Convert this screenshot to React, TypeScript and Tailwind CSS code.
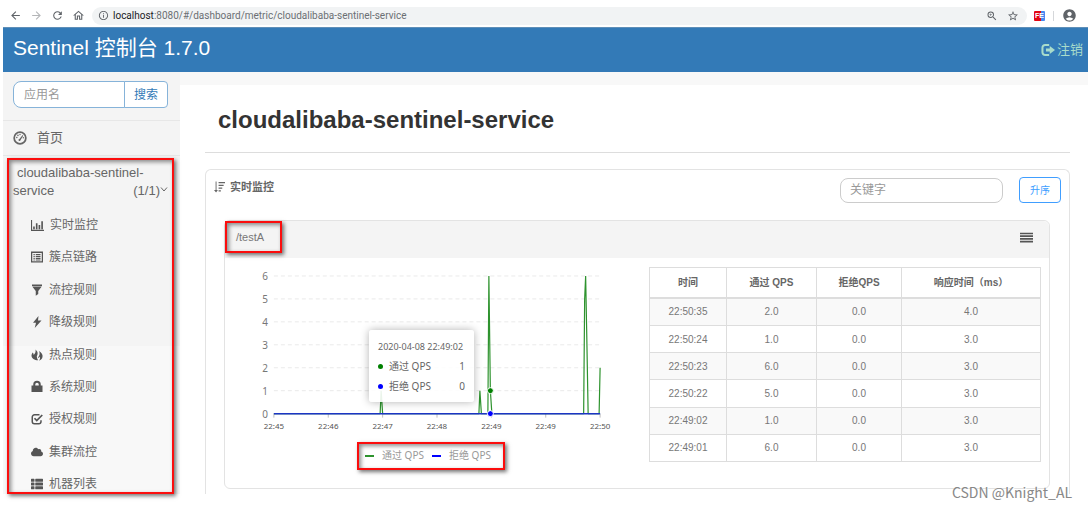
import type { ReactNode } from "react"
import { FaCloud, FaThList } from "react-icons/fa"
import {
  MdAccountCircle,
  MdArrowBack,
  MdArrowForward,
  MdInfoOutline,
  MdOutlineHome,
  MdRefresh,
  MdStarOutline,
  MdZoomIn,
} from "react-icons/md"

const red = "border-2 border-[#fb0d0d] pointer-events-none absolute"
const redShadow = "shadow-[2px_2px_4px_rgba(0,0,0,0.55),inset_2px_2px_4px_rgba(0,0,0,0.45)]"

const Glyph = ({ children, className = "w-3 h-3" }: { children: ReactNode; className?: string }) => (
  <svg viewBox="0 0 24 24" className={`${className} shrink-0`} fill="currentColor" aria-hidden="true">
    {children}
  </svg>
)

const DashboardIcon = () => (
  <Glyph className="w-[14px] h-[14px]">
    <circle cx="12" cy="12" r="10" fill="none" stroke="currentColor" strokeWidth="3" />
    <path d="M11 13.5 16.5 7l1 1-4.500 7.500a1.800 1.800 0 1 1-2-2z" />
    <circle cx="6.500" cy="11" r="1.300" />
    <circle cx="8.500" cy="7.500" r="1.300" />
    <circle cx="12" cy="6" r="1.200" />
    <circle cx="17.700" cy="11.500" r="1.200" />
  </Glyph>
)

const StatsIcon = () => (
  <Glyph className="w-[13px] h-[13px]">
    <path d="M0 2h2v18h22v2H0zM4 14h3v5H4zM9 8h3v11H9zM14 11h3v8h-3zM19 4h3v15h-3z" />
  </Glyph>
)

const ListAltIcon = () => (
  <Glyph>
    <path fillRule="evenodd" d="M0 1h24v22H0zM2.500 4v16.500h19V4z" />
    <path d="M5 6h2.500v2.500H5zM9.500 6H19v2.500H9.500zM5 10h2.500v2.500H5zM9.500 10H19v2.500H9.500zM5 14h2.500v2.500H5zM9.500 14H19v2.500H9.500zM5 17.500h2.500v1.500H5zM9.500 17.500H19v1.500H9.500z" />
  </Glyph>
)

const FilterIcon = () => (
  <Glyph>
    <path d="M2 1h20v3H2zM2.500 5h19L14.500 14v6l-5 3.500V14z" />
  </Glyph>
)

const FlashIcon = () => (
  <Glyph>
    <path d="M15 0 4 13.500h6L7.500 24 21 9h-7z" />
  </Glyph>
)

const FireIcon = () => (
  <Glyph>
    <path d="M9 1c3.500 3 5 6 4 10-.5 2-1.500 3-1.300 5 .2 2.500 1.300 4.500 2.500 6.500C7 22.500 1 19 1 13c0-2.500 1.500-4 2-6 1.500 1 2.500 3 2.300 5C8.500 9 10 5.500 9 1z" />
    <path d="M16 4c5 3 8 7 7 12-.6 3.500-3 6-7 7.500 2-3 2.800-5.800 1.500-8.500-.5 1.500-1.500 2.500-3.500 3 .3-2.500 3-4.500 3.200-7.500.2-2.500-.4-4.500-1.200-6.500z" />
  </Glyph>
)

const LockIcon = () => (
  <Glyph className="w-3 h-[13px]">
    <path fillRule="evenodd" d="M4.500 10V8a7.500 7.500 0 0 1 15 0v2H23v13H1V10zM8.500 10h7V8a3.500 3.500 0 0 0-7 0z" />
  </Glyph>
)

const CheckIcon = () => (
  <Glyph>
    <path
      d="M17 3.500H7A4.500 4.500 0 0 0 2.500 8v9A4.500 4.500 0 0 0 7 21.500h8.500A4.500 4.500 0 0 0 20 17v-2.500"
      fill="none"
      stroke="currentColor"
      strokeWidth="3"
    />
    <path d="m7 10.500 4.500 4.500L22.500 4" fill="none" stroke="currentColor" strokeWidth="3.500" />
  </Glyph>
)

const LogoutIcon = () => (
  <Glyph className="w-[14px] h-[14px]">
    <path
      d="M14 3.500H7A4.500 4.500 0 0 0 2.500 8v8A4.500 4.500 0 0 0 7 20.500h7"
      fill="none"
      stroke="currentColor"
      strokeWidth="3.500"
    />
    <path d="M8.500 9.500h6.500V5l9 7-9 7v-4.500H8.500z" />
  </Glyph>
)

const SortIcon = () => (
  <Glyph className="w-[11px] h-[12px]">
    <path d="M3.500 0h2v18.500h3L4.500 24 0 18.500h3.500zM10 1h14v3H10zM10 7h11v3H10zM10 13h8v3h-8zM10 19h5v3h-5z" />
  </Glyph>
)

const menu = [
  { label: "实时监控", icon: <StatsIcon /> },
  { label: "簇点链路", icon: <ListAltIcon /> },
  { label: "流控规则", icon: <FilterIcon /> },
  { label: "降级规则", icon: <FlashIcon /> },
  { label: "热点规则", icon: <FireIcon /> },
  { label: "系统规则", icon: <LockIcon /> },
  { label: "授权规则", icon: <CheckIcon /> },
  { label: "集群流控", icon: <FaCloud className="w-3 h-3" /> },
  { label: "机器列表", icon: <FaThList className="w-3 h-3" /> },
]

const rows = [
  ["22:50:35", "2.0", "0.0", "4.0"],
  ["22:50:24", "1.0", "0.0", "3.0"],
  ["22:50:23", "6.0", "0.0", "3.0"],
  ["22:50:22", "5.0", "0.0", "3.0"],
  ["22:49:02", "1.0", "0.0", "3.0"],
  ["22:49:01", "6.0", "0.0", "3.0"],
]

const times = ["22:45", "22:46", "22:47", "22:48", "22:49", "22:49", "22:50"]

const left = 49
const zero = 155
const step = 23
const tick = 54.5

const BrowserBar = () => (
  <div className="h-[27px] flex items-center pl-[9px] pr-[11px] pt-1 text-[#5f6368]">
    <div className="flex items-center gap-2 w-[83px]">
      <MdArrowBack className="w-[13px] h-[13px]" />
      <MdArrowForward className="w-[13px] h-[13px] text-[#b4b6b8]" />
      <MdRefresh className="w-[13px] h-[13px]" />
      <MdOutlineHome className="w-[13px] h-[13px]" />
    </div>
    <div className="flex-1 h-[18px] rounded-full bg-[#f1f3f4] flex items-center pl-[6px] pr-2">
      <MdInfoOutline className="w-[11px] h-[11px] mr-1" />
      <p className="flex-1 text-[10px] font-['Roboto',sans-serif] text-[#6b6f73]">
        <span className="text-[#202124]">localhost</span>:8080/#/dashboard/metric/cloudalibaba-sentinel-service
      </p>
      <MdZoomIn className="w-3 h-3 mr-[9px]" />
      <MdStarOutline className="w-3 h-3" />
    </div>
    <div className="flex items-center ml-[7px]">
      <span className="w-[11px] h-[10px] rounded-[1px] bg-gradient-to-r from-[#e30613] from-60% to-[#4688f1] to-60% text-white text-[7px] leading-[10px] font-bold text-center font-['Liberation_Sans',sans-serif]">
        FE
      </span>
      <span className="w-px h-[10px] bg-[#d5d7da] mx-2" />
      <MdAccountCircle className="w-[15px] h-[15px]" />
    </div>
  </div>
)

const Sidebar = () => (
  <aside className="relative w-[177px] shrink-0 flex flex-col bg-[linear-gradient(#f4f4f4_65%,#f8f8f8_65%)] text-[#666]">
    <div className="px-[10px] pt-[9px] pb-3 border-b border-[#e7e7e7]">
      <form className="flex w-[155px] h-[27px]">
        <input
          type="text"
          aria-label="应用名"
          placeholder="应用名"
          className="flex-1 min-w-0 px-[10px] text-xs bg-white border border-[#86b3d9] rounded-l-lg placeholder:text-[#999]"
        />
        <button
          type="button"
          className="w-11 -ml-px text-xs text-[#337ab7] bg-white border border-[#86b3d9] rounded-r"
        >
          搜索
        </button>
      </form>
    </div>
    <a href="#home" className="h-[35px] flex items-center gap-[10px] px-[10px] text-[13px] border-b border-[#e7e7e7]">
      <DashboardIcon />
      首页
    </a>
    <a href="#app" className="block pl-[10px] pr-3 pt-2 pb-[15px] text-[13px] leading-[18px]">
      <span className="block pl-1">cloudalibaba-sentinel-</span>
      <span className="flex">
        <span className="flex-1">service</span>
        <span>(1/1)</span>
        <svg viewBox="0 0 8 8" className="w-2 h-2 mt-1" fill="none" stroke="currentColor">
          <path d="M1 1.500 4 5l3-3.500" />
        </svg>
      </span>
    </a>
    <ul className="flex-1 flex flex-col justify-between pl-7 text-xs">
      {menu.map((item) => (
        <li key={item.label} className="h-5">
          <a href="#metric" className="flex items-center gap-[6px] h-5">
            <span className="text-[#555]">{item.icon}</span>
            {item.label}
          </a>
        </li>
      ))}
    </ul>
    <div className={`${red} ${redShadow} left-1 right-[6px] top-[86px] bottom-0`} />
  </aside>
)

const Chart = () => (
  <div className="relative flex-1 font-['Noto_Sans','Noto_Sans_CJK_SC',sans-serif]">
    <svg viewBox="0 -1 425 184" className="w-full" role="img" aria-label="QPS">
      {[0, 1, 2, 3, 4, 5, 6].map((n) => (
        <g key={n}>
          {n > 0 && (
            <path d={`M${left} ${zero - n * step}H376`} stroke="#eaeaea" strokeDasharray="4 3" fill="none" />
          )}
          <text x="43" y={zero - n * step + 4} textAnchor="end" fontSize="10" fill="#777">
            {n}
          </text>
        </g>
      ))}
      {times.map((t, i) => (
        <g key={i}>
          <path d={`M${left + i * tick} ${zero}v4`} stroke="#bfbfbf" />
          <text x={left + i * tick} y="170" textAnchor="middle" fontSize="8" fill="#555">
            {t}
          </text>
        </g>
      ))}
      <path
        d="M49 155H155.500L156.500 132 158 155H254.500L255.500 132 257 155H263.500L264.500 17 266 132 267.500 155H359.500L360.500 40 361.500 17 362.500 70 364 155H375L376 109"
        fill="none"
        stroke="#2e932e"
        strokeWidth="1.200"
        strokeLinejoin="bevel"
      />
      <path d="M49 155H376" stroke="#1c35c4" strokeWidth="1.500" />
      <circle cx="266" cy="132" r="3" fill="#008000" stroke="#fff" />
      <circle cx="266" cy="155" r="3" fill="#0000ff" stroke="#fff" />
    </svg>

    {/* hover tooltip */}
    <div className="absolute left-36 top-[72px] w-[105px] h-[72px] px-[9px] pt-2 rounded-[3px] bg-white/90 shadow-[0_0_8px_rgba(0,0,0,0.3)] text-[10px] text-[#666]">
      <p className="text-[9px] leading-[18px] whitespace-nowrap">2020-04-08 22:49:02</p>
      <p className="flex items-center leading-5">
        <span className="w-[5px] h-[5px] mr-[6px] rounded-full bg-[#008000]" />
        <span className="flex-1">通过 QPS</span>1
      </p>
      <p className="flex items-center leading-5">
        <span className="w-[5px] h-[5px] mr-[6px] rounded-full bg-[#0000ff]" />
        <span className="flex-1">拒绝 QPS</span>0
      </p>
    </div>

    <div className="flex justify-center pr-3">
      <div className="relative flex items-center w-[148px] h-7 pl-2 text-[10px] text-[#999]">
        <span className="w-[9px] h-[2px] mr-2 bg-[#2e932e]" />
        <span className="w-[50px]">通过 QPS</span>
        <span className="w-[9px] h-[2px] mr-2 bg-[#0000ff]" />
        <span>拒绝 QPS</span>
        <div className={`${red} ${redShadow} inset-0`} />
      </div>
    </div>
  </div>
)

const QpsTable = () => (
  <table className="w-[392px] h-[195px] mt-[9px] mr-2 mb-[26px] table-fixed border-collapse text-[10px] text-center text-[#777]">
    <thead>
      <tr className="h-[30px] text-[#666] border-b-2 border-[#ddd]">
        <th className="w-[77px] border border-b-2 border-[#ddd]">时间</th>
        <th className="w-[90px] border border-b-2 border-[#ddd]">通过 QPS</th>
        <th className="w-[85px] border border-b-2 border-[#ddd]">拒绝QPS</th>
        <th className="border border-b-2 border-[#ddd]">响应时间（ms）</th>
      </tr>
    </thead>
    <tbody>
      {rows.map((row) => (
        <tr key={row[0]} className="odd:bg-[#f9f9f9]">
          {row.map((cell, i) => (
            <td key={i} className="border border-[#ddd]">
              {cell}
            </td>
          ))}
        </tr>
      ))}
    </tbody>
  </table>
)

const App = () => {
  return (
    <div className="relative pb-[15px] bg-white font-['Liberation_Sans','Noto_Sans_CJK_SC',sans-serif]">
      <BrowserBar />
      <div className="pl-[3px]">
        <header className="h-[45px] flex items-center justify-between pl-[10px] pr-[5px] pb-1 bg-[#337ab7] border-t border-[#5f8fb8]">
          <h1 className="text-[21px] text-white">Sentinel 控制台 1.7.0</h1>
          <a href="#logout" className="flex items-center gap-[2px] pt-1 text-[13px] text-[#a9dccb]">
            <LogoutIcon />
            注销
          </a>
        </header>

        <div className="flex">
          <Sidebar />
          <main className="flex-1 min-w-0">
            <div className="h-[13px] bg-[#f8f8f8]" />
            <div className="pl-[25px] pr-[18px]">
              <h2 className="h-[68px] pl-[13px] text-2xl leading-[70px] font-bold text-[#333] border-b border-[#ddd]">
                cloudalibaba-sentinel-service
              </h2>

              <section className="mt-4 pb-[5px] border border-b-0 border-[#e3e3e3] rounded-t-md">
                <div className="flex items-center h-[50px] pl-2 pr-2 pb-[10px]">
                  <h3 className="flex items-center flex-1 gap-[5px] pb-[6px] text-[11px] font-bold text-[#666]">
                    <SortIcon />
                    实时监控
                  </h3>
                  <input
                    type="text"
                    aria-label="关键字"
                    placeholder="关键字"
                    className="w-[163px] h-[25px] px-[9px] mr-4 text-xs bg-white border border-[#ccc] rounded-lg placeholder:text-[#999]"
                  />
                  <button
                    type="button"
                    className="w-[42px] h-[26px] text-[10px] text-[#409eff] border border-[#409eff] rounded"
                  >
                    升序
                  </button>
                </div>

                <div className="ml-[18px] mr-[19px] border border-[#e3e3e3] rounded-md">
                  <div className="relative flex items-center justify-between h-[37px] pl-[11px] pr-4 pb-1 rounded-t-md bg-[#f4f4f4] text-[11px] text-[#777]">
                    <span>/testA</span>
                    <Glyph className="w-[13px] h-[13px] text-[#555]">
                      <path d="M0 3h24v3H0zM0 8h24v3H0zM0 13h24v3H0zM0 18h24v3H0z" />
                    </Glyph>
                    <div className={`${red} ${redShadow} left-0 top-0 w-[57px] h-8`} />
                  </div>
                  <div className="flex">
                    <Chart />
                    <QpsTable />
                  </div>
                </div>
              </section>
            </div>
          </main>
        </div>
      </div>

      <p className="absolute right-4 bottom-[7px] text-sm text-[#888] font-['Noto_Sans_CJK_SC',sans-serif] [text-shadow:1px_1px_0_#fff]">
        CSDN @Knight_AL
      </p>
    </div>
  )
}

export default App
